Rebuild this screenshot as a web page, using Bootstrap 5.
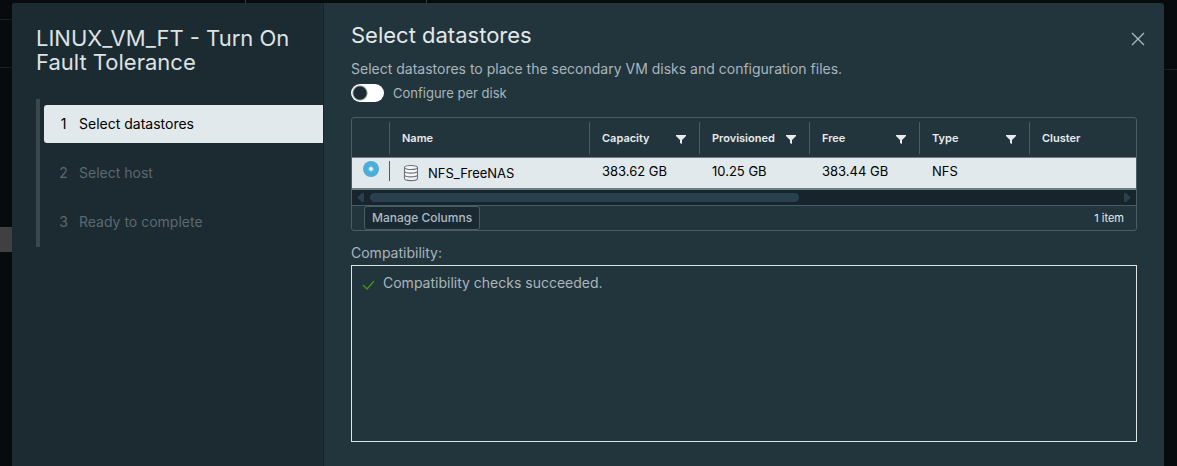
<!DOCTYPE html>
<html lang="en" data-bs-theme="dark">
<head>
<meta charset="utf-8">
<meta name="viewport" content="width=device-width, initial-scale=1">
<title>Turn On Fault Tolerance</title>
<link href="https://cdn.jsdelivr.net/npm/bootstrap@5.3.0/dist/css/bootstrap.min.css" rel="stylesheet">
<style>
body {
  font-family: Inter, "Open Sans", sans-serif;
  font-size: 13px; line-height: 18px; color: #a9b6be;
  padding: 3px 13px 0 12px;
  background:
    linear-gradient(#404040, #404040) 0 227px / 12px 25px no-repeat,
    linear-gradient(#1b2022, #1b2022) 0 19px / 12px 1px no-repeat,
    linear-gradient(#1b2022, #1b2022) 0 67px / 12px 1px no-repeat,
    linear-gradient(#1b2022, #1b2022) 100% 69px / 13px 1px no-repeat,
    linear-gradient(#3a4042, #3a4042) 245px 0 / 1px 3px no-repeat,
    linear-gradient(#3a4042, #3a4042) 426px 0 / 1px 3px no-repeat,
    #070b0d;
}
.wizard { background: #22343c; border-radius: 3px 3px 0 0; overflow: hidden; }
.wizard-side { width: 312px; background: #1c2a32; border-right: 1px solid #17242b; padding: 23px 0 0 24px; }
.wizard-title { font-size: 22px; line-height: 24px; font-weight: 400; color: #dde2e4; margin: 0 0 25px; }
.steps { border-left: 4px solid #3a484d; padding: 6px 0 6px 4px; gap: 11px; }
.step { height: 38px; padding: 0 0 0 15px; gap: 11px; font-size: 14px; color: #5b6970; background: none; border: 0; border-radius: 3px 0 0 3px; text-align: left; }
.step.current { background: #e2e9ec; color: #000; }
.step-no { width: 9px; text-align: center; }
.wizard-main { padding: 19px 27px 24px; min-width: 0; }
.page-title { font-size: 22px; line-height: 26px; font-weight: 400; color: #e3e8ea; margin: 0; }
.close-btn { background: none; border: 0; padding: 0; width: 14px; height: 14px; margin: 10px -8px 0 0; line-height: 0; }
.intro { font-size: 14px; margin: 12px 0 6px; }
.disk-toggle { gap: 9px; }
.disk-toggle input { appearance: none; width: 33px; height: 18px; border-radius: 9px; margin: 0; background: radial-gradient(circle at 9px 9px, #1c2a32 6px, #fff 8px); }
.grid-box { border: 1px solid #495d67; border-radius: 3px; margin: 15px 0 13px; }
.ds-table { table-layout: fixed; width: 100%; font-size: 13px; }
.ds-table th { height: 39px; padding: 4px 0 3px; color: #e8ecee; font-size: 11px; font-weight: 600; }
.ds-table .head { height: 32px; border-right: 1px solid #495d67; padding: 0 13px 0 12px; }
.ds-table th:last-child .head { border: 0; }
.ds-table td { height: 31px; background: #e2e9ec; color: #000; border-top: 1px solid #6d7d84; border-bottom: 2px solid #6d7d84; padding: 4px 0 0 12px; vertical-align: top; }
.ds-table td.pick { padding: 3px 0 0 11px; }
.pick .cell { height: 20px; margin-top: 2px; border-right: 1px solid #495d67; }
.pick input { appearance: none; display: block; width: 16px; height: 16px; margin: -2px 0 0; border-radius: 50%; background: radial-gradient(circle, #fff 1px, #49afd9 3px); }
.ds-table td.name { padding-top: 6px; }
.filter-btn { border: 0; padding: 0; background: none; line-height: 0; margin-top: 3px; }
.col-pick { width: 38px; }
.col-name { width: 200px; }
.col-data { width: 110px; }
.hbar { height: 15px; background: #17242b; padding: 0 5px; gap: 6px; }
.hbar-track { height: 9px; }
.hbar-thumb { height: 9px; border-radius: 5px; background: #29414f; }
.grid-foot { height: 25px; border-top: 1px solid #495d67; padding: 0 12px; font-size: 11px; color: #e8ecee; }
.manage-btn { height: 24px; padding: 0 7px; font-size: 12px; font-weight: 500; line-height: 18px; color: #acbac3; background: #1b2a32; border: 1px solid #495d67; border-radius: 3px; }
.compat-title { font-size: 14px; }
.compat { border: 1px solid #e0e4e5; margin-top: 3px; padding: 8px 10px; font-size: 14px; min-height: 80px; gap: 8px; }
.compat svg { margin-top: 6px; }
</style>
</head>
<body class="d-flex min-vh-100">
<div class="wizard d-flex flex-fill" role="dialog" aria-labelledby="wizardTitle">
  <aside class="wizard-side flex-shrink-0">
    <h1 class="wizard-title" id="wizardTitle">LINUX_VM_FT - Turn On<br>Fault Tolerance</h1>
    <nav class="steps d-flex flex-column" aria-label="Steps">
      <button type="button" class="step current d-flex align-items-center" aria-current="step"><span class="step-no">1</span><span>Select datastores</span></button>
      <button type="button" class="step d-flex align-items-center"><span class="step-no">2</span><span>Select host</span></button>
      <button type="button" class="step d-flex align-items-center"><span class="step-no">3</span><span>Ready to complete</span></button>
    </nav>
  </aside>
  <main class="wizard-main flex-fill d-flex flex-column">
    <div class="d-flex justify-content-between align-items-start">
      <h2 class="page-title">Select datastores</h2>
      <button type="button" class="close-btn" aria-label="Close"><svg width="14" height="14" viewBox="0 0 14 14" stroke="#acbac3" stroke-width="1.3" fill="none"><path d="M1 1l12 12M13 1L1 13"/></svg></button>
    </div>
    <p class="intro">Select datastores to place the secondary VM disks and configuration files.</p>
    <div class="disk-toggle d-flex align-items-center">
      <input type="checkbox" role="switch" id="perDisk"><label for="perDisk">Configure per disk</label>
    </div>
    <div class="grid-box">
      <table class="ds-table">
        <colgroup><col class="col-pick"><col class="col-name"><col class="col-data"><col class="col-data"><col class="col-data"><col class="col-data"><col></colgroup>
        <thead><tr>
          <th><div class="head"></div></th>
          <th><div class="head d-flex align-items-center">Name</div></th>
          <th><div class="head d-flex align-items-center justify-content-between">Capacity<button type="button" class="filter-btn" aria-label="Filter capacity"><svg width="10" height="9" viewBox="0 0 10 9" fill="#e8ecee"><path d="M0 0h10v1L6 5v4L4 8V5L0 1z"/></svg></button></div></th>
          <th><div class="head d-flex align-items-center justify-content-between">Provisioned<button type="button" class="filter-btn" aria-label="Filter provisioned"><svg width="10" height="9" viewBox="0 0 10 9" fill="#e8ecee"><path d="M0 0h10v1L6 5v4L4 8V5L0 1z"/></svg></button></div></th>
          <th><div class="head d-flex align-items-center justify-content-between">Free<button type="button" class="filter-btn" aria-label="Filter free"><svg width="10" height="9" viewBox="0 0 10 9" fill="#e8ecee"><path d="M0 0h10v1L6 5v4L4 8V5L0 1z"/></svg></button></div></th>
          <th><div class="head d-flex align-items-center justify-content-between">Type<button type="button" class="filter-btn" aria-label="Filter type"><svg width="10" height="9" viewBox="0 0 10 9" fill="#e8ecee"><path d="M0 0h10v1L6 5v4L4 8V5L0 1z"/></svg></button></div></th>
          <th><div class="head d-flex align-items-center">Cluster</div></th>
        </tr></thead>
        <tbody><tr>
          <td class="pick"><div class="cell"><input type="radio" name="datastore" aria-label="NFS_FreeNAS" checked></div></td>
          <td class="name"><div class="d-flex align-items-center gap-2"><svg width="18" height="18" viewBox="0 0 18 18" fill="#f4f6f7" stroke="#6c7275" stroke-width="1.1"><path d="M2.5 3.6v11c0 1.2 2.9 2 6.500 2s6.500-.8 6.500-2v-11"/><ellipse cx="9" cy="3.500" rx="6.500" ry="2"/><path fill="none" d="M2.500 7.200c0 1.100 2.900 1.900 6.500 1.900s6.500-.8 6.500-1.900M2.500 11c0 1.100 2.900 1.900 6.500 1.900s6.500-.8 6.500-1.900"/></svg><span>NFS_FreeNAS</span></div></td>
          <td>383.62 GB</td><td>10.25 GB</td><td>383.44 GB</td><td>NFS</td><td></td>
        </tr></tbody>
      </table>
      <div class="hbar d-flex align-items-center">
        <svg width="7" height="9" viewBox="0 0 7 9" fill="#29414f"><path d="M0 4.500L5 0h2v9H5z"/></svg>
        <div class="hbar-track flex-fill"><div class="hbar-thumb" style="width:57.3%"></div></div>
        <svg width="7" height="9" viewBox="0 0 7 9" fill="#29414f"><path d="M7 4.500L2 0H0v9h2z"/></svg>
      </div>
      <div class="grid-foot d-flex justify-content-between align-items-center">
        <button type="button" class="manage-btn">Manage Columns</button><span>1 item</span>
      </div>
    </div>
    <div class="compat-title">Compatibility:</div>
    <div class="compat flex-fill d-flex align-items-start">
      <svg width="13" height="10" viewBox="0 0 13 10" fill="none" stroke="#4a9310" stroke-width="1.2"><path d="M1 5l4 4 7-8"/></svg>
      <span>Compatibility checks succeeded.</span>
    </div>
  </main>
</div>
<script src="https://cdn.jsdelivr.net/npm/bootstrap@5.3.0/dist/js/bootstrap.bundle.min.js"></script>
</body>
</html>
